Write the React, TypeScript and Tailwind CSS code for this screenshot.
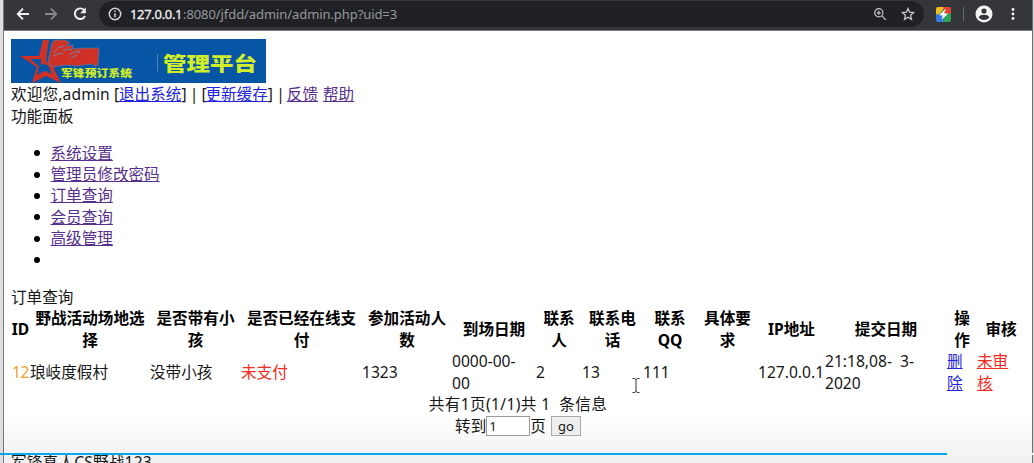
import React from 'react';

type Column = { head: string[]; cell: React.ReactNode; width: string };

const columns: Column[] = [
  { head: ['ID'], cell: <span className="ml-px tracking-[-0.3px] text-[#f3a02c]">12</span>, width: 'w-[19px]' },
  { head: ['野战活动场地选', '择'], cell: '琅岐度假村', width: 'w-[120px]' },
  { head: ['是否带有小', '孩'], cell: '没带小孩', width: 'w-[91px]' },
  { head: ['是否已经在线支', '付'], cell: <span className="text-[#f32a20]">未支付</span>, width: 'w-[121px]' },
  { head: ['参加活动人', '数'], cell: '1323', width: 'w-[90px]' },
  { head: ['到场日期'], cell: <>0000-00-<br />00</>, width: 'w-[84px]' },
  { head: ['联系', '人'], cell: '2', width: 'w-[46px]' },
  { head: ['联系电', '话'], cell: '13', width: 'w-[61px]' },
  { head: ['联系', 'QQ'], cell: '111', width: 'w-[54px]' },
  { head: ['具体要', '求'], cell: '', width: 'w-[61px]' },
  { head: ['IP地址'], cell: '127.0.0.1', width: 'w-[67px]' },
  { head: ['提交日期'], cell: <>21:18,08-<span className="ml-[4px]"> 3-</span><br />2020</>, width: 'w-[122px]' },
  { head: ['操', '作'], cell: <a className="text-[#2222e0] underline">删<br />除</a>, width: 'w-[30px]' },
  { head: ['审核'], cell: <a className="text-[#f32a20] underline">未审<br />核</a>, width: 'w-[48px]' },
];

const menu = ['系统设置', '管理员修改密码', '订单查询', '会员查询', '高级管理', ''];

function Toolbar() {
  return (
    <header className="flex h-[31px] w-[1029px] shrink-0 items-start border-b border-[#77797b] bg-[#35363a] font-['Noto_Sans',sans-serif]">
      <svg className="mt-[7px] ml-[11px] h-[14px] w-[16px]" viewBox="0 0 16 14" fill="none" stroke="#f1f3f4" strokeWidth="1.8">
        <path d="M14 7H3M8 1.7 2.7 7 8 12.3" />
      </svg>
      <svg className="mt-[7px] ml-[12px] h-[14px] w-[16px]" viewBox="0 0 16 14" fill="none" stroke="#85878a" strokeWidth="1.8">
        <path d="M2 7h11M8 1.7 13.3 7 8 12.3" />
      </svg>
      <svg className="mt-[6px] ml-[13px] h-4 w-4" viewBox="0 0 16 16" fill="none" stroke="#f1f3f4" strokeWidth="1.9">
        <path d="M12.2 4.2A5.3 5.3 0 1 0 13 10" />
        <path d="M13.8 1.5v5.7H8.1z" fill="#f1f3f4" stroke="none" />
      </svg>
      <div className="mt-px ml-[11px] flex h-[26px] w-[825px] items-center rounded-full bg-[#202124] pr-[9px] pl-[9px]">
        <svg className="h-[14px] w-[14px] shrink-0" viewBox="0 0 14 14" fill="none" stroke="#d5d7d9" strokeWidth="1.5">
          <circle cx="7" cy="7" r="5.7" />
          <path d="M7 6.2v4M7 3.4v1.5" />
        </svg>
        <div className="ml-[8px] flex text-[13px] leading-[26px] whitespace-pre text-[#96999c]">
          <span className="w-[53px] tracking-[-0.32px] text-[#f1f3f4] [-webkit-text-stroke:0.3px_#f1f3f4]">127.0.0.1</span>
          <span className="tracking-[-0.08px]">:8080/jfdd/admin/admin.php?uid=3</span>
        </div>
        <svg className="ml-auto h-[14px] w-[14px]" viewBox="0 0 14 14" fill="none" stroke="#c3c5c8" strokeWidth="1.2">
          <circle cx="5.8" cy="5.8" r="4.1" />
          <path d="m9 9 3.8 3.8M3.8 5.8h4M5.8 3.8v4" />
        </svg>
        <svg className="ml-[14px] h-[14px] w-[14px]" viewBox="0 0 14 14" fill="none" stroke="#c3c5c8" strokeWidth="1.3">
          <path d="m7 1.5 1.6 3.7 4 .4-3 2.7.9 4L7 10.2l-3.5 2.1.9-4-3-2.7 4-.4z" />
        </svg>
      </div>
      <svg className="mt-[7px] ml-[12px] h-[15px] w-[15px]" viewBox="0 0 14 14">
        <rect width="14" height="14" rx="2" fill="#2da452" />
        <path d="M2 0h6L3 7H0V2a2 2 0 0 1 2-2z" fill="#f6bd23" />
        <path d="M7 0h5a2 2 0 0 1 2 2v4H7z" fill="#e8412f" />
        <path d="M0 7h7v7H2a2 2 0 0 1-2-2z" fill="#3479e0" />
        <path d="M8.600 2 3 7.600l3.200.4L5.200 12l6.100-5.600-3.900-.5L9.400 2z" fill="#fff" />
      </svg>
      <div className="mt-[7px] ml-[12px] h-[14px] w-px bg-[#66686b]" />
      <svg className="mt-[5px] ml-[11px] h-[18px] w-[18px]" viewBox="0 0 18 18">
        <circle cx="9" cy="9" r="8.5" fill="#f1f3f4" />
        <circle cx="9" cy="6" r="2.6" fill="#35363a" />
        <path d="M3.7 12.2c1-3.3 9.6-3.3 10.6 0a6.4 6.4 0 0 1-10.6 0z" fill="#35363a" />
      </svg>
      <svg className="mt-[7px] ml-[18px] h-[14px] w-[4px]" viewBox="0 0 4 14" fill="#f1f3f4">
        <circle cx="2" cy="2.5" r="1.4" />
        <circle cx="2" cy="7" r="1.4" />
        <circle cx="2" cy="11.5" r="1.4" />
      </svg>
    </header>
  );
}

function Banner() {
  return (
    <svg className="block h-[44px] w-[255px]" viewBox="0 0 255 44">
      <rect width="255" height="44" fill="#0755a5" />
      <path
        d="M32 1h6l-2 12-1 10 11 2-3 5 7 14-15-7-14 7 5-16L9 17l19 0zM30 20l-11 0 9 7-2 9 8-4 7 3-4-9-7-1z"
        fill="#cf3126"
        fillRule="evenodd"
      />
      <path
        d="M41 4l3-3h10l5 3-4 3 7-1-1 4 10-1 17 0-1 17-3 1-3-2-15 2-11-1-5 1H40l-3-4z"
        fill="#cf3126"
        stroke="#557fad"
        strokeWidth=".7"
      />
      <path d="M43 14l3-4M42 17l7-3 3 1M47 9l6-2M52 12l4-2 5 1M58 16l5-3h6l-3-2M60 19l6-3" fill="none" stroke="#688db5" strokeWidth=".9" />
      <path d="M146.500 15v17" stroke="#527fae" />
      <g className="font-['Noto_Sans_CJK_SC',sans-serif] font-black" fill="#d1ee28">
        <text x="50" y="38" fontSize="10.500" textLength="71" lengthAdjust="spacingAndGlyphs">军锋预订系统</text>
        <text x="152" y="31.500" fontSize="19.500" textLength="94" lengthAdjust="spacingAndGlyphs">管理平台</text>
      </g>
    </svg>
  );
}

export default function App() {
  return (
    <div className="relative flex h-[463px] w-[1034px] overflow-hidden bg-white font-['Noto_Sans','Noto_Sans_CJK_SC',sans-serif] text-[15.6px] leading-[21.4px] text-[#161616]">
      <div className="h-full w-[4px] shrink-0 border-r border-[#77777b] bg-[#dedede]" />
      <div className="flex w-[1028px] shrink-0 flex-col bg-[linear-gradient(to_bottom,#fff_415px,#f0f0f0_463px)]">
        <Toolbar />
        <main className="flex flex-col pt-[8px] pl-[7px]">
          <Banner />
          <p className="mt-px flex h-[22px] whitespace-pre">
            <span className="w-[108px] tracking-[0.15px]">欢迎您,admin [</span>
            <a className="text-[#2222e0] underline">退出系统</a>
            <span className="w-[24px] tracking-[-0.45px]">] | [</span>
            <a className="text-[#2222e0] underline">更新缓存</a>
            <span className="w-[19px] tracking-[-0.4px]">] |</span>
            <a className="text-[#56308c] underline">反馈</a>
            <a className="ml-[5px] text-[#56308c] underline">帮助</a>
          </p>
          <p className="h-[21px]">功能面板</p>
          <ul className="mt-[15.5px] list-none">
            {menu.map((item, i) => (
              <li key={i} className="flex h-[21.4px] items-center">
                <span className="ml-[23px] h-[6px] w-[6px] rounded-full bg-black" />
                <a className="ml-[10.5px] text-[#56308c] underline">{item}</a>
              </li>
            ))}
          </ul>
          <p className="mt-[16.4px] h-[21px]">订单查询</p>
          <table className="w-[1014px] table-fixed border-collapse">
            <thead>
              <tr className="h-[43px] text-black">
                {columns.map((c) => (
                  <th key={c.head[0]} className={`${c.width} p-0 text-center align-middle font-bold whitespace-nowrap`}>
                    {c.head.map((line) => <span key={line} className="block">{line}</span>)}
                  </th>
                ))}
              </tr>
            </thead>
            <tbody>
              <tr className="h-[43px]">
                {columns.map((c) => (
                  <td key={c.head[0]} className="p-0 align-middle whitespace-nowrap">{c.cell}</td>
                ))}
              </tr>
            </tbody>
          </table>
          <div className="flex w-[1014px] flex-col items-center">
            <p className="h-[21px] tracking-[0.37px] whitespace-pre">共有1页(1/1)共 1  条信息</p>
            <div className="flex h-[22px] items-center">
              <span>转到</span>
              <input
                defaultValue="1"
                className="h-[20px] w-[44px] border border-[#9a9a9a] bg-white px-[2px] font-['Noto_Sans',sans-serif] text-[13px] outline-none"
              />
              <span>页</span>
              <button className="ml-[5px] h-[20px] w-[30px] border border-[#a9a9a9] bg-[#eeeeee] font-['Noto_Sans',sans-serif] text-[13px] leading-[17px]">
                go
              </button>
            </div>
          </div>
          <p className="mt-[15px] tracking-[0.2px] whitespace-pre">军锋真人CS野战123</p>
        </main>
      </div>
      <div className="h-full w-[2px] shrink-0 border-l border-[#6e7276] bg-[#cfd3d6]" />
      <div className="absolute top-[453px] left-0 flex h-[2px] w-full bg-[#f7f7f7]">
        <div className="w-[947px] bg-[#08a9e6]" />
      </div>
      <svg className="absolute top-[378px] left-[632px] h-[15px] w-[8px]" viewBox="0 0 8 15" fill="none" stroke="#333" strokeWidth="1">
        <path d="M.5.5h2L4 1.500 5.500.5h2M4 1.500v12M.5 14.500h2L4 13.500l1.500 1h2" />
      </svg>
    </div>
  );
}
